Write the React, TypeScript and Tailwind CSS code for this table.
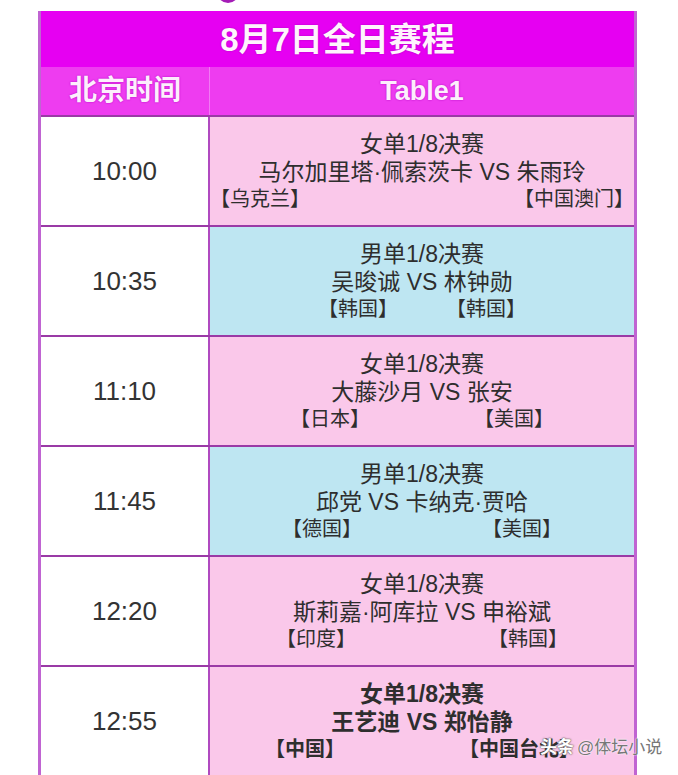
import React from "react";

type Match = {
  time: string;
  title: string;
  names: string;
  left: string;
  right: string;
  tone: "pink" | "blue";
  span: string;
  bold?: boolean;
};

const matches: Match[] = [
  { time: "10:00", title: "女单1/8决赛", names: "马尔加里塔·佩索茨卡 VS 朱雨玲", left: "【乌克兰】", right: "【中国澳门】", tone: "pink", span: "w-[424px]" },
  { time: "10:35", title: "男单1/8决赛", names: "吴晙诚 VS 林钟勋", left: "【韩国】", right: "【韩国】", tone: "blue", span: "w-[208px]" },
  { time: "11:10", title: "女单1/8决赛", names: "大藤沙月 VS 张安", left: "【日本】", right: "【美国】", tone: "pink", span: "w-[264px]" },
  { time: "11:45", title: "男单1/8决赛", names: "邱党 VS 卡纳克·贾哈", left: "【德国】", right: "【美国】", tone: "blue", span: "w-[280px]" },
  { time: "12:20", title: "女单1/8决赛", names: "斯莉嘉·阿库拉 VS 申裕斌", left: "【印度】", right: "【韩国】", tone: "pink", span: "w-[292px]" },
  { time: "12:55", title: "女单1/8决赛", names: "王艺迪 VS 郑怡静", left: "【中国】", right: "【中国台北】", tone: "pink", span: "w-[314px]", bold: true },
];

const font = { fontFamily: '"Liberation Sans", "Noto Sans CJK SC", sans-serif' };

function Row({ m }: { m: Match }) {
  const bg = m.tone === "pink" ? "bg-[#fac8ea]" : "bg-[#bee6f2]";
  return (
    <div className="grid grid-cols-[169px_1fr] h-[110px] border-t-2 border-[#9a3aa6]">
      <div className="bg-white flex items-center justify-center border-r-2 border-[#b04ac0]">
        <span className="text-[26px] text-[#333] leading-none">{m.time}</span>
      </div>
      <div className={`${bg} flex flex-col items-center justify-center text-[#2e2e2e] ${m.bold ? "font-bold" : ""}`}>
        <div className="text-[23px] leading-[28px]">{m.title}</div>
        <div className="text-[23px] leading-[28px]">{m.names}</div>
        <div className={`${m.span} flex justify-between text-[20px] leading-[27px]`}>
          <span>{m.left}</span>
          <span>{m.right}</span>
        </div>
      </div>
    </div>
  );
}

export default function App() {
  return (
    <div className="relative w-[678px] h-[775px] bg-white overflow-hidden" style={font}>
      {/* bit of the badge above the table */}
      <div className="absolute left-[217px] top-[-19px] w-[22px] h-[22px] rounded-full bg-[#a41cb6]" />

      <div className="pt-[11px] pl-[38px]">
        <div className="w-[599px] border-l-[3px] border-r-[3px] border-[#c064d2]">
          {/* title */}
          <div className="h-[56px] bg-[#e600f2] flex items-center justify-center">
            <span className="text-[33px] font-bold text-[#fff4fd] leading-none [text-shadow:0_0_2px_#b000c0]">8月7日全日赛程</span>
          </div>
          {/* header */}
          <div className="grid grid-cols-[169px_1fr] h-[48px] bg-[#ee3cf0]">
            <div className="flex items-center justify-center border-r border-[#f27af4]">
              <span className="text-[28px] font-bold text-[#fdeefc] leading-none [text-shadow:0_0_2px_#b000c0]">北京时间</span>
            </div>
            <div className="flex items-center justify-center">
              <span className="text-[27px] font-bold text-[#fdeefc] leading-none [text-shadow:0_0_2px_#b000c0]">Table1</span>
            </div>
          </div>
          {matches.map(m => (
            <Row key={m.time} m={m} />
          ))}
        </div>
      </div>

      {/* watermark */}
      <div className="absolute left-[540px] top-[739px] flex items-center gap-[3px] text-[17px] leading-none whitespace-nowrap">
        <span className="font-bold text-white [text-shadow:0_0_2px_#555,0_0_1px_#555]">头条</span>
        <span className="text-[#777] [text-shadow:0_0_2px_#fff,0_0_1px_#fff]">@体坛小说</span>
      </div>
    </div>
  );
}
